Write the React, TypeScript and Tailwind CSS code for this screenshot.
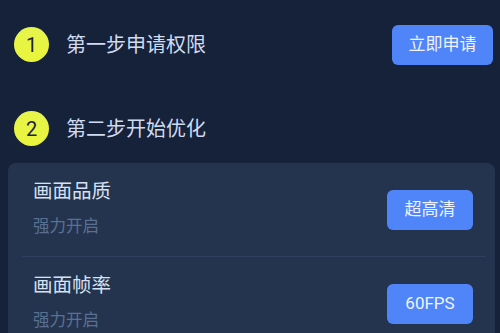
import React from 'react';

const FONT = { fontFamily: 'Roboto, "Noto Sans CJK SC", sans-serif' };

function Step({ n, label, action }: { n: number; label: string; action?: string }) {
  return (
    <div className="flex items-center h-[35px]">
      <div className="w-[35px] h-[35px] rounded-full bg-gradient-to-b from-[#e6f44c] to-[#e9f53a] flex items-center justify-center text-[20px] text-[#1c2536] leading-none">
        {n}
      </div>
      <span className="ml-[17px] text-[20px] text-[#cfdbef] leading-none">{label}</span>
      {action && (
        <button className="ml-auto w-[101px] h-[40px] rounded-[6px] bg-[#4f85f8] text-[17px] text-[#eef3ff]">
          {action}
        </button>
      )}
    </div>
  );
}

function Option({ title, sub, value }: { title: string; sub: string; value: string }) {
  return (
    <div className="flex items-center h-[93px] pl-[25px] pr-[22px]">
      <div className="flex flex-col">
        <span className="text-[19.5px] leading-[28px] text-[#d6e1f3] mt-[-4px]">{title}</span>
        <span className="text-[16.5px] leading-[22px] mt-[10px] text-[#5b7091]">{sub}</span>
      </div>
      <button className="ml-auto w-[86px] h-[40px] rounded-[6px] bg-[#4f85f8] text-[17px] text-[#eef3ff]">
        {value}
      </button>
    </div>
  );
}

export default function App() {
  return (
    <div className="w-[500px] h-[333px] overflow-hidden bg-[#16213a]" style={FONT}>
      <div className="pl-[14px] pr-[7px] pt-[27px]">
        <Step n={1} label="第一步申请权限" action="立即申请" />
        <div className="mt-[49px]">
          <Step n={2} label="第二步开始优化" />
        </div>
      </div>
      <div className="mt-[17px] ml-[8px] mr-[5px] rounded-[8px] bg-[#24344f]">
        <Option title="画面品质" sub="强力开启" value="超高清" />
        <div className="h-px ml-[14px] mr-[10px] bg-[#2f3f5d]" />
        <Option title="画面帧率" sub="强力开启" value="60FPS" />
      </div>
    </div>
  );
}
